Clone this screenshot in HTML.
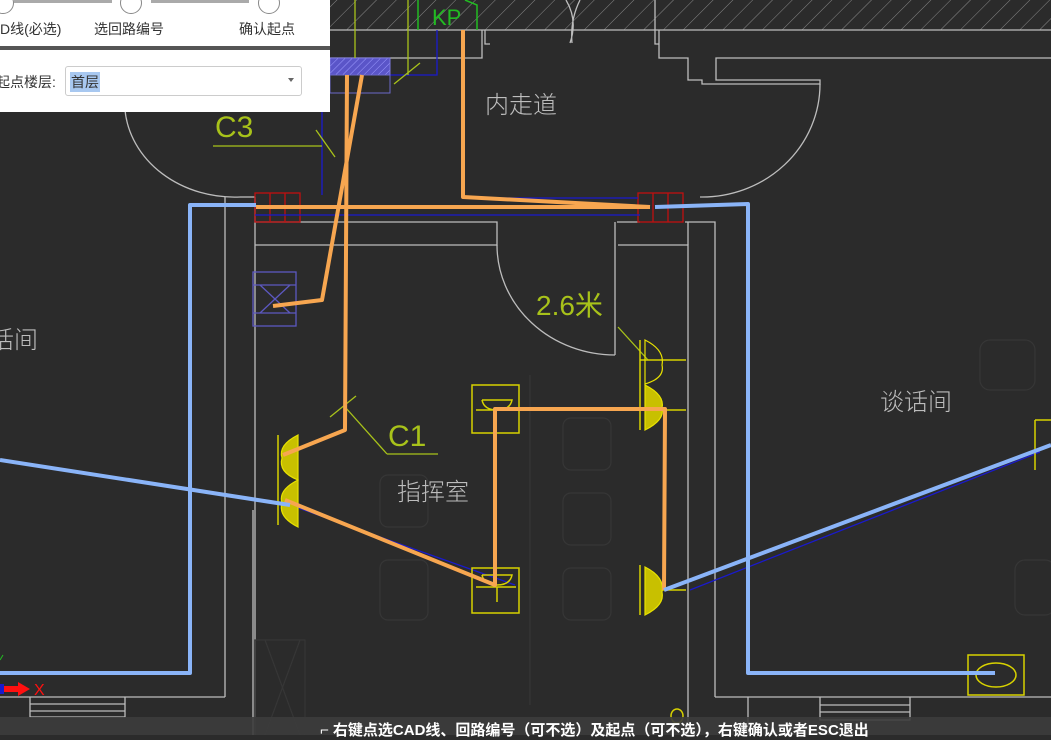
<!DOCTYPE html>
<html><head><meta charset="utf-8"><style>
html,body{margin:0;padding:0;background:#2b2b2b;width:1051px;height:735px;overflow:hidden;font-family:"Liberation Sans","Noto Sans CJK SC",sans-serif}
.p{position:absolute}
</style></head><body>
<svg class="p" style="left:0;top:0" width="1051" height="735" viewBox="0 0 1051 735">
<rect width="1051" height="735" fill="#2b2b2b"/>
<defs>
<pattern id="h" width="14" height="14" patternUnits="userSpaceOnUse" patternTransform="rotate(45)"><line x1="0" y1="0" x2="0" y2="14" stroke="#888" stroke-width="1"/></pattern>
<pattern id="hb" width="5" height="5" patternUnits="userSpaceOnUse" patternTransform="rotate(45)"><rect width="5" height="5" fill="#5a55c8"/><line x1="0" y1="0" x2="0" y2="5" stroke="#9d9aff" stroke-width="1"/></pattern>
</defs>
<rect x="330" y="0" width="721" height="30" fill="url(#h)"/>
<g fill="none" stroke="#bdbdbd" stroke-width="1.3">
<line x1="330" y1="30" x2="1051" y2="30"/>
<polyline points="330,58 482,58 482,30"/>
<polyline points="485,30 485,44 490,44"/>
<polyline points="655,0 655,44 659,44"/>
<polyline points="659,30 659,58 688,58 688,80 702,80 702,84 820,84 820,80 716,80 716,58 1051,58"/>
<path d="M566,0 Q578,20 570,43 M580,0 Q570,20 572,43"/>
<path d="M125,110 A110,95 0 0 0 240,197"/>
<line x1="240" y1="197" x2="255" y2="197"/>
<path d="M820,84 A118,113 0 0 1 700,197"/>
<polyline points="225,197 225,697"/>
<polyline points="255,197 255,735"/>
<polyline points="255,222 497,222 497,245 255,245"/>
<polyline points="617,222 640,222"/>
<polyline points="615,245 615,222"/>
<polyline points="685,222 715,222 715,697"/>
<polyline points="618,245 688,245 688,735"/>
<polyline points="688,222 688,245"/>
<path d="M497,245 A118,110 0 0 0 615,355"/>
<line x1="615" y1="245" x2="615" y2="355"/>
<polyline points="0,697 225,697"/>
<polyline points="30,697 30,717 125,717 125,697"/>
<line x1="30" y1="704" x2="125" y2="704"/><line x1="30" y1="711" x2="125" y2="711"/>
<polyline points="715,697 1051,697"/>
<polyline points="748,697 748,735"/>
<polyline points="820,697 820,720 910,720 910,697"/>
<line x1="820" y1="705" x2="910" y2="705"/><line x1="820" y1="712" x2="910" y2="712"/>
<line x1="253" y1="510" x2="253" y2="735"/>
</g>
<g fill="none" stroke="#363636" stroke-width="1.2">
<rect x="563" y="418" width="48" height="52" rx="8"/><rect x="563" y="493" width="48" height="52" rx="8"/><rect x="563" y="568" width="48" height="52" rx="8"/>
<rect x="380" y="475" width="48" height="52" rx="8"/><rect x="380" y="560" width="48" height="60" rx="8"/>
<line x1="530" y1="375" x2="530" y2="705"/>
<rect x="980" y="340" width="55" height="50" rx="10"/><rect x="1015" y="560" width="40" height="55" rx="10"/>
<line x1="265" y1="640" x2="300" y2="735"/><line x1="300" y1="640" x2="265" y2="735"/>
<rect x="255" y="640" width="50" height="95"/>
</g>
<g fill="none" stroke="#c01010" stroke-width="1.3">
<rect x="255" y="193" width="45" height="29"/><line x1="270" y1="193" x2="270" y2="222"/><line x1="285" y1="193" x2="285" y2="222"/>
<rect x="638" y="193" width="45" height="29"/><line x1="653" y1="193" x2="653" y2="222"/><line x1="668" y1="193" x2="668" y2="222"/>
</g>
<g fill="none" stroke="#1a1acc" stroke-width="1.3">
<polyline points="437,30 437,75 390,75"/>
<line x1="322" y1="95" x2="322" y2="195"/>
<line x1="255" y1="215" x2="640" y2="215"/>
<line x1="463" y1="198" x2="638" y2="198"/>
<line x1="515" y1="585" x2="290" y2="505"/>
<line x1="690" y1="590" x2="1040" y2="452"/>
</g>
<rect x="330" y="58" width="60" height="17" fill="url(#hb)" stroke="#7d7ae0"/>
<rect x="330" y="75" width="60" height="18" fill="none" stroke="#6b68c8"/>
<g fill="none" stroke="#5c58c0" stroke-width="1.3"><rect x="253" y="272" width="43" height="54"/><line x1="253" y1="285" x2="296" y2="285"/><line x1="253" y1="313" x2="296" y2="313"/><line x1="260" y1="285" x2="290" y2="313"/><line x1="290" y1="285" x2="260" y2="313"/></g>
<g fill="none" stroke="#a8c21a" stroke-width="1.3">
<line x1="355" y1="0" x2="355" y2="58"/><line x1="408" y1="0" x2="408" y2="75"/>
<line x1="394" y1="84" x2="420" y2="63"/>
<line x1="213" y1="146" x2="322" y2="146"/><line x1="316" y1="130" x2="335" y2="157"/>
<line x1="330" y1="417" x2="356" y2="396"/><line x1="345" y1="407" x2="387" y2="454"/><line x1="387" y1="454" x2="438" y2="454"/>
<line x1="618" y1="327" x2="648" y2="360"/>
</g>
<g fill="none" stroke="#22bb22" stroke-width="1.5"><polyline points="418,30 418,0"/><polyline points="477,30 477,5 465,0"/></g>
<text x="432" y="25" fill="#22bb22" font-size="22" font-family="Liberation Sans,sans-serif">KP</text>
<text x="215" y="137" fill="#a8c21a" font-size="30" font-family="Liberation Sans,sans-serif" font-weight="200">C3</text>
<text x="388" y="446" fill="#a8c21a" font-size="30" font-family="Liberation Sans,sans-serif">C1</text>
<text x="536" y="315" fill="#a8c21a" font-size="28" font-family="Liberation Sans,sans-serif">2.6米</text>
<g fill="none" stroke="#d8d200" stroke-width="1.5">
<rect x="472" y="385" width="47" height="48"/><path d="M482,400 h30 q-2,10 -15,10 q-13,0 -15,-10 M476,410 h40"/>
<rect x="472" y="568" width="47" height="45"/><path d="M482,575 h30 q-2,10 -15,10 q-13,0 -15,-10 M476,587 h40 M497,587 v15"/>
<rect x="968" y="655" width="56" height="40"/><ellipse cx="996" cy="675" rx="20" ry="12"/>
<line x1="1035" y1="420" x2="1051" y2="420"/><line x1="1035" y1="420" x2="1035" y2="470"/>
<line x1="278" y1="435" x2="278" y2="525"/><line x1="640" y1="340" x2="640" y2="430"/><line x1="640" y1="565" x2="640" y2="615"/>
<line x1="640" y1="360" x2="686" y2="360"/><line x1="640" y1="410" x2="686" y2="410"/><line x1="660" y1="590" x2="686" y2="590"/>
</g>
<g fill="#c8c000" stroke="#e8e200" stroke-width="1.2">
<path d="M298,435 Q278,445 282,458 Q278,472 298,480 Z"/>
<path d="M298,480 Q278,490 282,503 Q278,517 298,527 Z"/>
<path d="M645,340 Q665,350 662,365 Q665,378 645,384 Z" fill="none"/>
<path d="M645,385 Q665,395 662,408 Q665,420 645,430 Z"/>
<path d="M645,567 Q665,577 662,592 Q665,605 645,615 Z"/>
</g>
<g fill="none" stroke="#f7a650" stroke-width="4" stroke-linejoin="round">
<polyline points="463,30 463,197 650,207"/>
<line x1="256" y1="207" x2="650" y2="207"/>
<polyline points="362,75 322,300 273,306"/>
<polyline points="347,75 345,430 283,455"/>
<polyline points="285,500 495,585 495,409 665,409 664,590"/>
</g>
<g fill="none" stroke="#8ab4f8" stroke-width="4" stroke-linejoin="round">
<polyline points="256,205 190,205 190,673 0,673"/>
<polyline points="655,207 748,204 748,673 995,673"/>
<polyline points="0,460 290,505"/>
<polyline points="664,590 1051,445"/>
</g>
<rect x="0" y="684" width="4" height="10" fill="#1a1acc"/>
<path d="M4,686 h14 v-4 l12,7 -12,7 v-4 h-14z" fill="#ff1010"/>
<text x="34" y="695" fill="#ff1010" font-size="16">X</text>
<line x1="0" y1="660" x2="3" y2="655" stroke="#22bb22"/>
<g fill="#bdbdbd" font-family="Liberation Sans,'Noto Sans CJK SC',sans-serif" font-size="24" font-weight="200">
<text x="485" y="113">内走道</text>
<text x="397" y="500">指挥室</text>
<text x="880" y="410">谈话间</text>
<text x="-10" y="348">话间</text>
</g>
<ellipse cx="677" cy="716" rx="6" ry="7" fill="none" stroke="#d8d200" stroke-width="1.5"/>
</svg>
<div class="p" style="left:0;top:717px;width:1051px;height:18px;background:rgba(60,60,60,0.9)"></div>
<div class="p" style="left:320px;top:719px;color:#fff;font-size:15px;font-weight:bold;white-space:nowrap;font-family:'Liberation Sans','Noto Sans CJK SC',sans-serif">⌐ 右键点选CAD线、回路编号（可不选）及起点（可不选），右键确认或者ESC退出</div>
<div class="p" style="left:0;top:0;width:330px;height:112px;background:#fff"></div>
<div class="p" style="left:0;top:46px;width:330px;height:4px;background:#555"></div>
<div class="p" style="left:14px;top:0;width:98px;height:3px;background:#aaa"></div>
<div class="p" style="left:151px;top:0;width:98px;height:3px;background:#aaa"></div>
<div class="p" style="left:120px;top:-8px;width:20px;height:20px;border:1.5px solid #888;border-radius:50%;background:#fff"></div>
<div class="p" style="left:258px;top:-8px;width:20px;height:20px;border:1.5px solid #888;border-radius:50%;background:#fff"></div>
<div class="p" style="left:-8px;top:-8px;width:20px;height:20px;border:1.5px solid #888;border-radius:50%;background:#fff"></div>
<div class="p" style="left:0;top:19px;font-size:14px;color:#333;font-family:'Liberation Sans','Noto Sans CJK SC',sans-serif">D线(必选)</div>
<div class="p" style="left:94px;top:19px;font-size:14px;color:#333;font-family:'Liberation Sans','Noto Sans CJK SC',sans-serif">选回路编号</div>
<div class="p" style="left:239px;top:19px;font-size:14px;color:#333;font-family:'Liberation Sans','Noto Sans CJK SC',sans-serif">确认起点</div>
<div class="p" style="left:-4px;top:72px;font-size:14px;color:#333;font-family:'Liberation Sans','Noto Sans CJK SC',sans-serif">起点楼层:</div>
<div class="p" style="left:65px;top:66px;width:235px;height:28px;border:1px solid #ccc;border-radius:3px;background:#fff"></div>
<div class="p" style="left:70px;top:72px;font-size:14px;color:#333;background:#a8c8f0;padding:0 1px;font-family:'Liberation Sans','Noto Sans CJK SC',sans-serif">首层</div>
<div class="p" style="left:288px;top:78px;width:0;height:0;border-left:3px solid transparent;border-right:3px solid transparent;border-top:4px solid #666"></div>
</body></html>
